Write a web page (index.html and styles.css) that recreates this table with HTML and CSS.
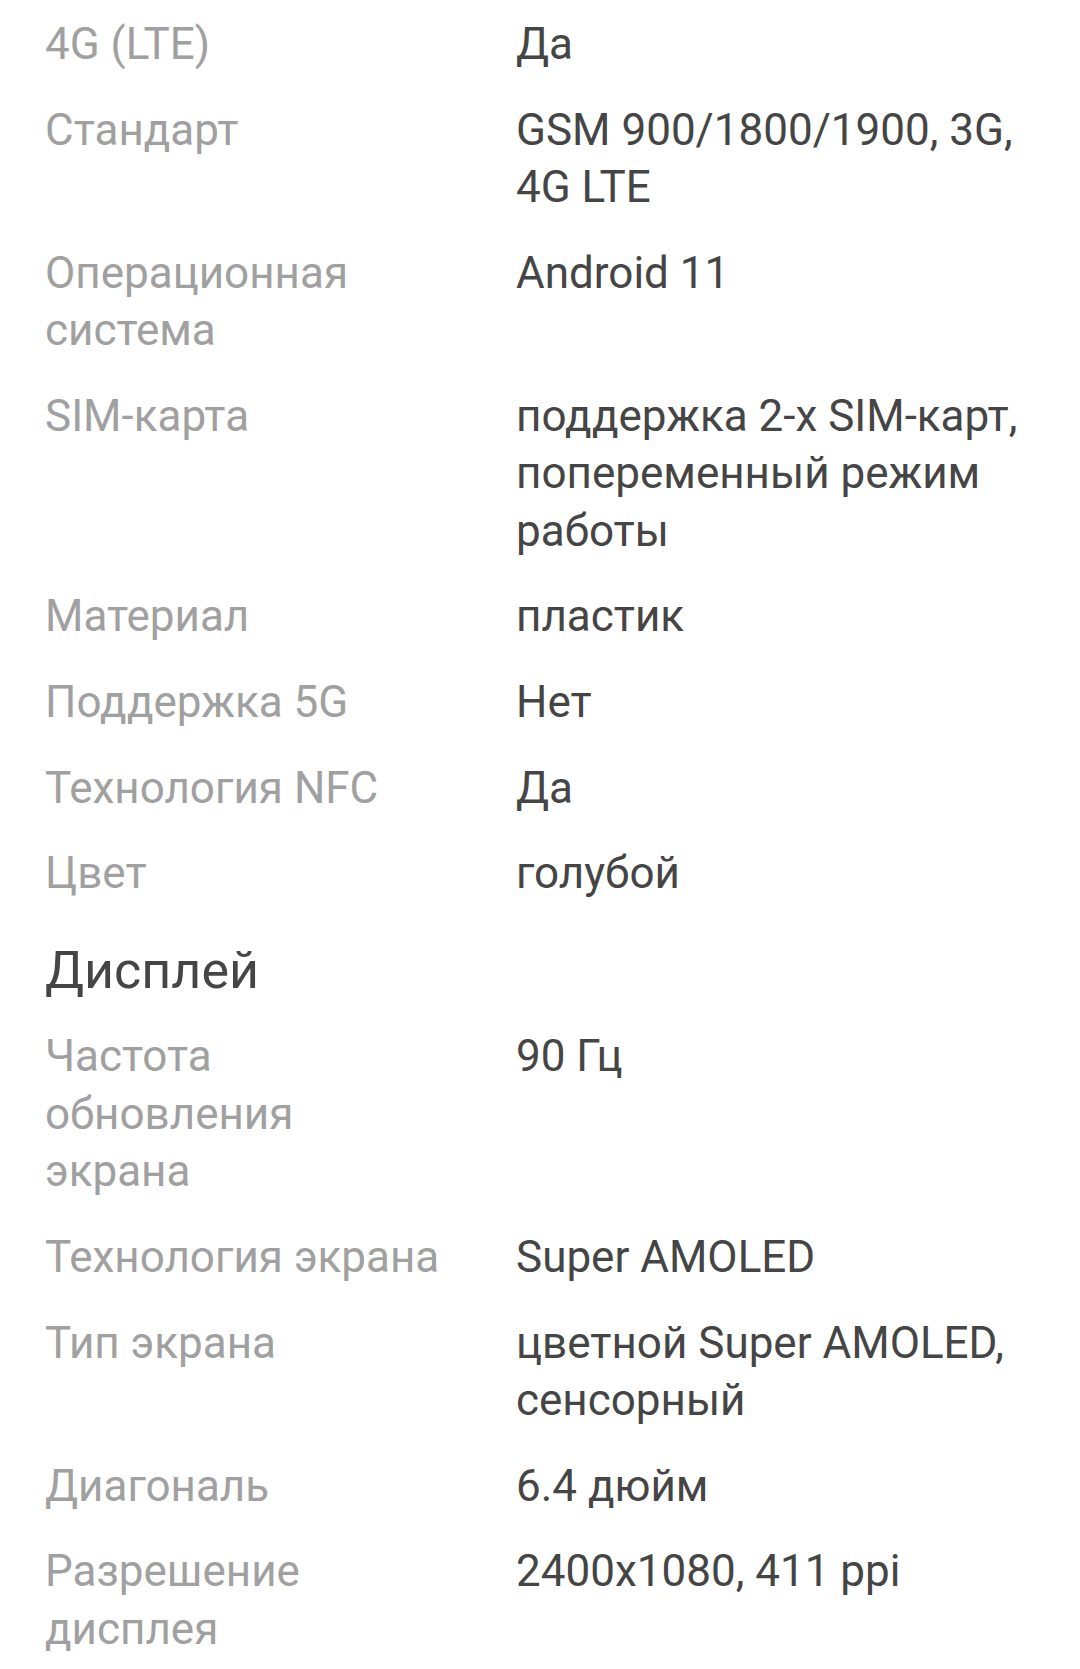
FILE: index.html
```html
<!DOCTYPE html>
<html lang="ru">
<head>
<meta charset="utf-8">
<title>Характеристики</title>
<link rel="stylesheet" href="styles.css">
</head>
<body>
<main class="specs">
  <section class="group">
    <div class="row"><div class="label">4G (LTE)</div><div class="value">Да</div></div>
    <div class="row"><div class="label">Стандарт</div><div class="value">GSM 900/1800/1900, 3G, 4G LTE</div></div>
    <div class="row"><div class="label">Операционная система</div><div class="value">Android 11</div></div>
    <div class="row"><div class="label">SIM-карта</div><div class="value">поддержка 2-х SIM-карт, попеременный режим работы</div></div>
    <div class="row"><div class="label">Материал</div><div class="value">пластик</div></div>
    <div class="row"><div class="label">Поддержка 5G</div><div class="value">Нет</div></div>
    <div class="row"><div class="label">Технология NFC</div><div class="value">Да</div></div>
    <div class="row"><div class="label">Цвет</div><div class="value">голубой</div></div>
  </section>
  <section class="group">
    <h2 class="group-title">Дисплей</h2>
    <div class="row"><div class="label">Частота обновления экрана</div><div class="value">90 Гц</div></div>
    <div class="row"><div class="label">Технология экрана</div><div class="value">Super AMOLED</div></div>
    <div class="row"><div class="label">Тип экрана</div><div class="value">цветной Super AMOLED, сенсорный</div></div>
    <div class="row"><div class="label">Диагональ</div><div class="value">6.4 дюйм</div></div>
    <div class="row"><div class="label">Разрешение дисплея</div><div class="value">2400x1080, 411 ppi</div></div>
  </section>
</main>
</body>
</html>
```
FILE: styles.css
```css
html, body {
  margin: 0;
  padding: 0;
  background: #ffffff;
}

body {
  font-family: Roboto, "Noto Sans", "Liberation Sans", sans-serif;
  overflow: hidden;
}

.specs {
  padding: 2px 45px 0 45px;
}

.row {
  display: grid;
  grid-template-columns: 398px 1fr;
  column-gap: 73px;
  padding: 14.05px 0;
  font-size: 44px;
  line-height: 57.5px;
}

.label {
  color: #a0a0a0;
}

.value {
  color: #454545;
}

.group-title {
  margin: 0;
  padding: 25.7px 0 14.5px 0;
  font-size: 52px;
  font-weight: 400;
  line-height: 57.5px;
  color: #454545;
}
```
